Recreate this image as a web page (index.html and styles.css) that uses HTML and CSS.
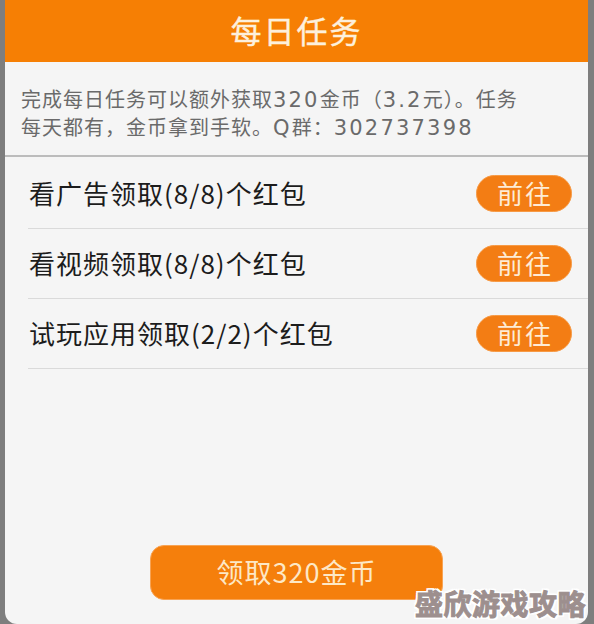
FILE: index.html
```html
<!DOCTYPE html>
<html lang="zh-CN">
<head>
<meta charset="utf-8">
<title>每日任务</title>
<link rel="stylesheet" href="styles.css">
</head>
<body>
<div class="frame">
  <div class="card">
    <header class="header">每日任务</header>
    <section class="info">
      <p>完成每日任务可以额外获取<span class="num">320</span>金币（<span class="num">3.2</span>元）。任务<br>每天都有，金币拿到手软。<span class="num">Q</span>群：<span class="num">302737398</span></p>
    </section>
    <ul class="tasks">
      <li class="task"><span class="task-name">看广告领取(8/8)个红包</span><button class="go">前往</button></li>
      <li class="task"><span class="task-name">看视频领取(8/8)个红包</span><button class="go">前往</button></li>
      <li class="task"><span class="task-name">试玩应用领取(2/2)个红包</span><button class="go">前往</button></li>
    </ul>
    <div class="footer">
      <button class="claim">领取320金币</button>
    </div>
    <div class="watermark">盛欣游戏攻略</div>
  </div>
</div>
</body>
</html>
```

FILE: styles.css
```css
* {
  box-sizing: border-box;
}

html, body {
  margin: 0;
  padding: 0;
}

body {
  width: 594px;
  height: 624px;
  overflow: hidden;
  background: #7e7e7e;
  font-family: "Noto Sans CJK SC", "Noto Sans", sans-serif;
}

.frame {
  display: flex;
  height: 624px;
  padding: 0 6px 0 5px;
}

.card {
  position: relative;
  flex: 1;
  display: flex;
  flex-direction: column;
  background: #f5f5f5;
  border-radius: 0 0 12px 12px;
  overflow: hidden;
}

.header {
  height: 62px;
  display: flex;
  align-items: center;
  justify-content: center;
  background: #f67f04;
  color: #fdf0dc;
  font-size: 31px;
  letter-spacing: 2px;
  padding-bottom: 4px;
  -webkit-text-stroke: 0.4px #fdf0dc;
}

.info {
  padding: 23px 10px 14px 16px;
  border-bottom: 2px solid #bcbcbc;
}

.info p {
  margin: 0;
  font-size: 20px;
  line-height: 28px;
  letter-spacing: 1px;
  color: #6a6a6a;
}

.num {
  font-family: "DejaVu Sans", "Noto Sans CJK SC", sans-serif;
  font-size: 21px;
  line-height: 20px;
  letter-spacing: 2.2px;
}

.tasks {
  list-style: none;
  margin: 0;
  padding: 2px 0 0 0;
}

.task {
  height: 70px;
  margin-left: 23px;
  padding: 0 16px 0 1px;
  display: flex;
  align-items: center;
  justify-content: space-between;
  border-bottom: 1px solid #dadada;
}

.task-name {
  font-size: 26px;
  letter-spacing: 1px;
  color: #1c1c1c;
  padding-bottom: 2px;
}

.go {
  width: 96px;
  height: 37px;
  border: 1px solid #f79a45;
  border-radius: 19px;
  background: #f37d14;
  color: #fdecd6;
  font-family: inherit;
  font-size: 26px;
  letter-spacing: 2px;
  line-height: 1;
  padding: 0 0 2px 2px;
}

.footer {
  margin-top: auto;
  padding-bottom: 24px;
  display: flex;
  justify-content: center;
}

.claim {
  width: 293px;
  height: 55px;
  border: 1px solid #f8a353;
  border-radius: 14px;
  background: #f57f0c;
  color: #fde8c6;
  font-family: inherit;
  font-size: 27px;
  letter-spacing: 1px;
  line-height: 1;
  padding: 0 0 2px 0;
}

.watermark {
  position: absolute;
  right: 2px;
  bottom: 3px;
  font-size: 28px;
  font-weight: 700;
  line-height: 1.2;
  letter-spacing: 0.5px;
  color: #9d8f8e;
  -webkit-text-stroke: 1px #9d8f8e;
  text-shadow: 0 0 2px #fff, 2px 2px 0 #fff, -2px -2px 0 #fff, 2px -2px 0 #fff, -2px 2px 0 #fff, 0 2px 0 #fff, 0 -2px 0 #fff, 2px 0 0 #fff, -2px 0 0 #fff;
}
```
